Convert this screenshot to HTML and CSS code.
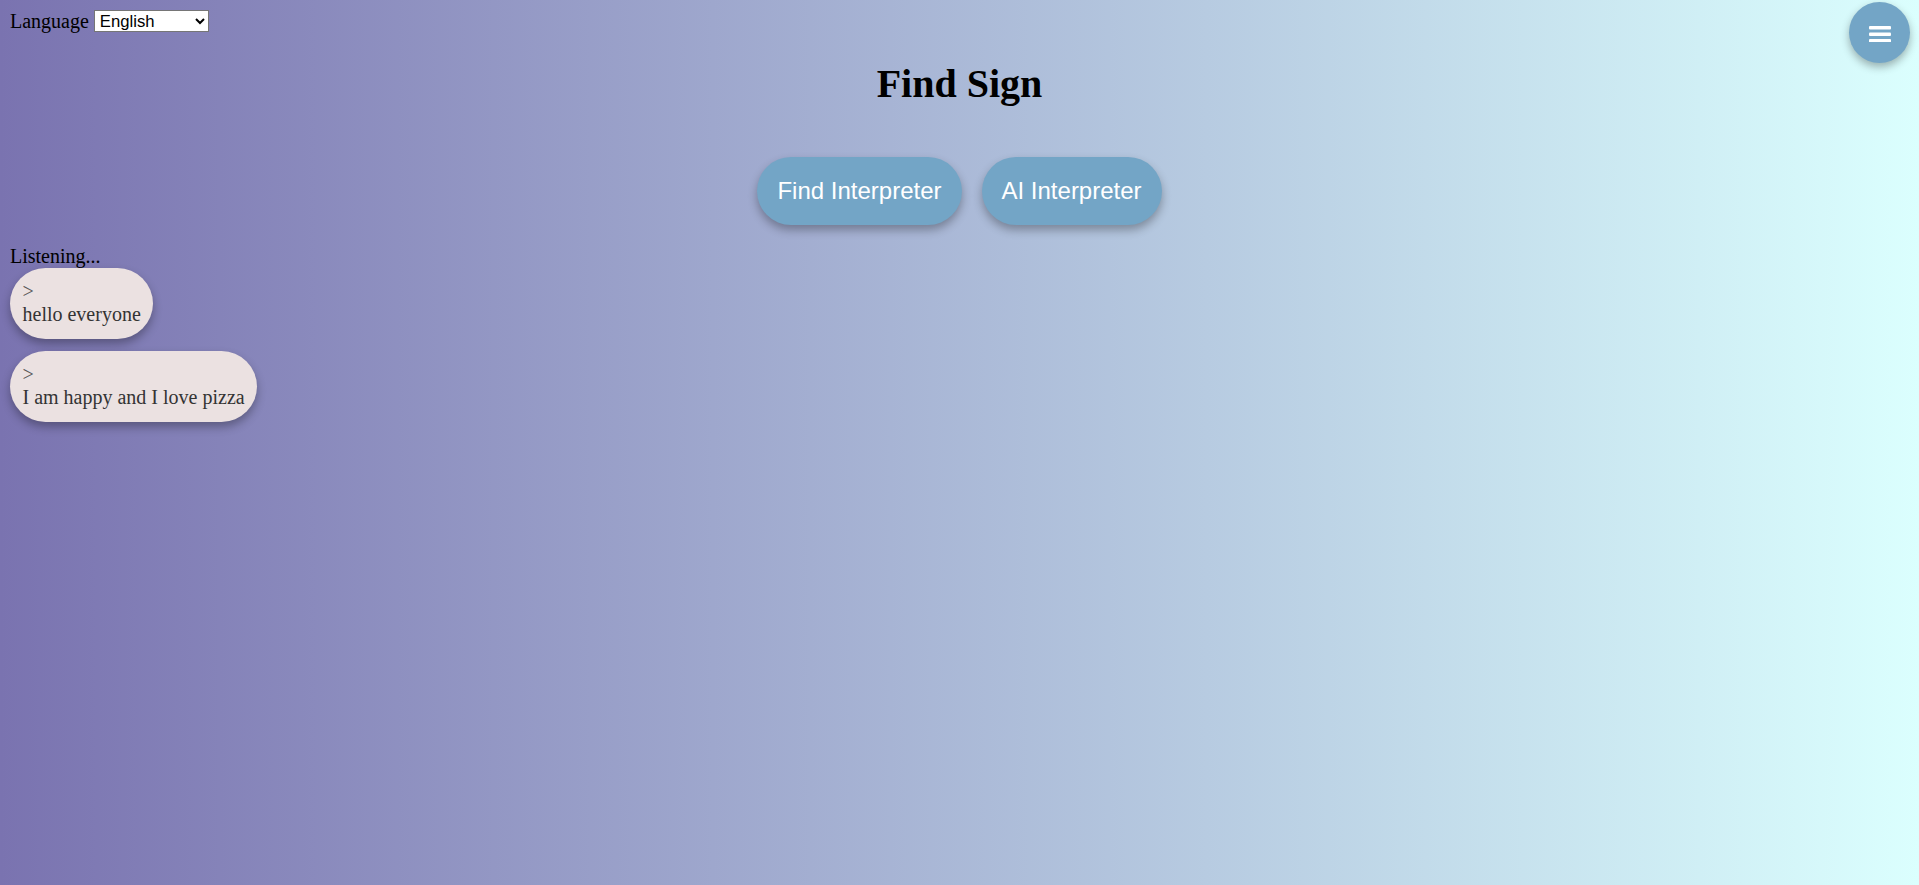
FILE: index.html
```html
<!DOCTYPE html>
<html lang="en">
<head>
<meta charset="utf-8">
<title>Find Sign</title>
<link rel="stylesheet" href="styles.css">
</head>
<body>
<div class="lang-row">
  <label class="lang-label">Language</label>
  <select class="lang-select">
    <option>English</option>
  </select>
</div>
<button class="menu-btn" aria-label="Menu">
  <svg width="22" height="18" viewBox="0 0 22 18"><rect x="0" y="2" width="22" height="3.5" rx="1" fill="#fff"/><rect x="0" y="8.5" width="22" height="3.5" rx="1" fill="#fff"/><rect x="0" y="15" width="22" height="3.5" rx="1" fill="#fff"/></svg>
</button>
<h1 class="title">Find Sign</h1>
<div class="actions">
  <button class="pill">Find Interpreter</button>
  <button class="pill">AI Interpreter</button>
</div>
<div class="status">Listening...</div>
<div class="messages">
  <div class="bubble"><div class="prompt">&gt;</div><div class="msg">hello everyone</div></div>
  <div class="bubble"><div class="prompt">&gt;</div><div class="msg">I am happy and I love pizza</div></div>
</div>
</body>
</html>
```
FILE: styles.css
```css
html, body {
  height: 100%;
}
body {
  margin: 0;
  padding: 10px;
  box-sizing: border-box;
  font-family: "Liberation Serif", "Times New Roman", serif;
  font-size: 20px;
  color: #000;
  background: linear-gradient(to right, #7a73b0, #dbfffe);
  min-height: 885px;
}
.lang-row {
  line-height: 23px;
  height: 23px;
}
.lang-select {
  font-family: "Liberation Sans", Arial, sans-serif;
  font-size: 16.67px;
  width: 115px;
  height: 22px;
  padding: 0 1px;
  border: 1px solid #767676;
  border-radius: 0;
  background: #fff;
  color: #000;
  vertical-align: top;
  margin-left: 0;
}
.menu-btn {
  position: fixed;
  top: 2px;
  right: 9px;
  width: 61px;
  height: 61px;
  border-radius: 50%;
  border: none;
  background: #73a5c6;
  box-shadow: 0 4px 8px rgba(0, 0, 0, 0.3);
  display: flex;
  align-items: center;
  justify-content: center;
  padding: 0;
}
.title {
  font-size: 40px;
  font-weight: bold;
  text-align: center;
  margin: 28px 0 27px;
  line-height: 46px;
}
.actions {
  display: flex;
  justify-content: center;
  gap: 20px;
  padding: 23px 0 20px;
}
.pill {
  font-family: "Liberation Sans", Arial, sans-serif;
  font-size: 24px;
  color: #fff;
  background: #73a5c6;
  border: none;
  border-radius: 40px;
  padding: 20px 20px;
  line-height: 27.6px;
  box-shadow: 0 5px 10px rgba(0, 0, 0, 0.3);
}
.status {
  line-height: 23px;
}
.messages {
  display: flex;
  flex-direction: column;
  align-items: flex-start;
  gap: 12px;
}
.bubble {
  background: #ebe1e1;
  color: #333;
  border-radius: 36px;
  padding: 12.5px 12.5px;
  line-height: 23px;
  box-shadow: 0 5px 10px rgba(0, 0, 0, 0.3);
}
.prompt {
  color: #555;
}
```
